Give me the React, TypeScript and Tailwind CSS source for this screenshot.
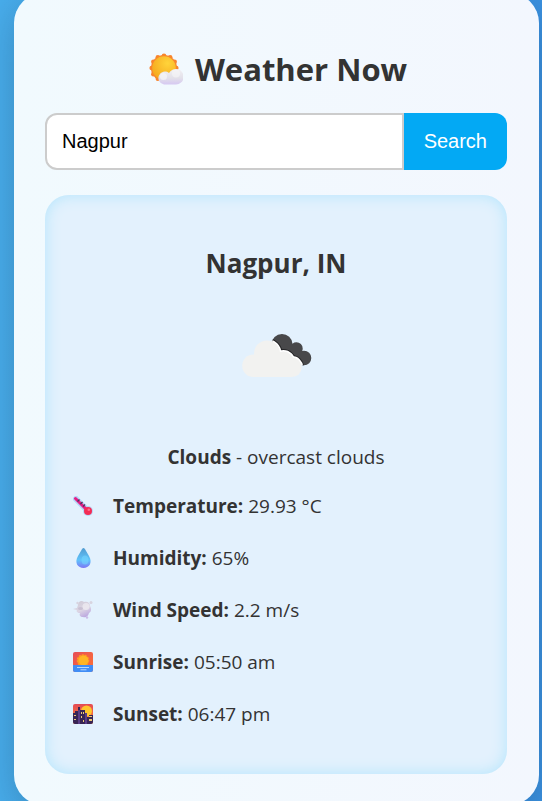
import { useState } from "react";
import type { ReactNode } from "react";

function SunCloudIcon() {
  const petals = Array.from({ length: 12 }, (_, i) => (i * Math.PI) / 6);
  return (
    <svg viewBox="-4 0 38 34" className="h-[34px] w-[38px] shrink-0" aria-hidden="true">
      <defs>
        <radialGradient id="sun" cx="0.65" cy="0.3" r="0.8">
          <stop offset="0" stopColor="#ffd43a" />
          <stop offset="1" stopColor="#f5a51c" />
        </radialGradient>
        <linearGradient id="puff" x1="0" y1="0" x2="0" y2="1">
          <stop offset="0" stopColor="#f2f1f4" />
          <stop offset="0.6" stopColor="#e2e0e9" />
          <stop offset="1" stopColor="#d6c8f2" />
        </linearGradient>
      </defs>
      <circle cx="15" cy="16" r="13" fill="#f8852c" />
      {petals.map((a) => (
        <circle key={a} cx={15 + 12.3 * Math.cos(a)} cy={16 + 12.3 * Math.sin(a)} r="2.3" fill="#f8852c" />
      ))}
      <circle cx="15" cy="16" r="11.8" fill="url(#sun)" />
      <path d="M15 32.500a6.500 6.500 0 1 1 5-11.500A7.800 7.800 0 1 1 27 32.500z" fill="url(#puff)" />
      <circle cx="14.500" cy="24.500" r="3.500" fill="#f7f6f8" opacity="0.7" />
      <circle cx="27" cy="21.500" r="4" fill="#f7f6f8" opacity="0.6" />
    </svg>
  );
}

function FrontCloud() {
  return (
    <>
      <circle cx="27.500" cy="58.700" r="11.300" />
      <circle cx="41" cy="46.500" r="13" />
      <circle cx="57.500" cy="54.500" r="10" />
      <circle cx="66" cy="60.300" r="9.700" />
      <path d="M27.500 50h38v20h-38z" />
    </>
  );
}

function OvercastIcon() {
  return (
    <svg viewBox="0 0 100 100" className="mx-auto size-[100px]" role="img" aria-label="overcast clouds">
      <defs>
        <clipPath id="back-cloud">
          <circle cx="56" cy="37.500" r="10.500" />
          <circle cx="70.500" cy="41.500" r="6.200" />
          <circle cx="78" cy="51" r="7.300" />
          <path d="M47 42l26-3 6 19-13 0-18-12z" />
        </clipPath>
      </defs>
      <g clipPath="url(#back-cloud)">
        <rect width="100" height="100" fill="#48484a" />
        <g fill="#252527" stroke="#252527" strokeWidth="5"><FrontCloud /></g>
        <g fill="#ffffff" stroke="#ffffff" strokeWidth="3"><FrontCloud /></g>
      </g>
      <g fill="#f2f2f0"><FrontCloud /></g>
    </svg>
  );
}

function ThermometerIcon() {
  return (
    <svg viewBox="0 0 20 20" className="size-5" aria-hidden="true">
      <path d="M3 3l11 11" stroke="#b5d5f8" strokeWidth="6" strokeLinecap="round" />
      <circle cx="15" cy="15" r="5" fill="#b5d5f8" />
      <path d="M2.500 2.500L14 14" stroke="#e51e87" strokeWidth="3" strokeLinecap="round" />
      <path d="M6.500 3.500l-2 2M9.500 6l-2 2M12 8.500l-2 2" stroke="#493760" strokeWidth="1.300" />
      <circle cx="15" cy="15" r="4" fill="#f42c55" />
      <circle cx="15.800" cy="13.800" r="1.300" fill="#ff718d" />
    </svg>
  );
}

function DropletIcon() {
  return (
    <svg viewBox="0 0 20 20" className="size-5" aria-hidden="true">
      <defs>
        <linearGradient id="drop" x1="0" y1="0" x2="0" y2="1">
          <stop offset="0" stopColor="#529cd1" />
          <stop offset="0.6" stopColor="#60c3fb" />
          <stop offset="1" stopColor="#7c77f5" />
        </linearGradient>
      </defs>
      <path d="M10.500 0c1 0 1.500 1 2 2l3.500 6c4 7 0 12-5.500 12S1 15 5 8l3.500-6c.5-1 1-2 2-2z" fill="url(#drop)" />
      <ellipse cx="12" cy="12" rx="3.500" ry="4.500" fill="#76d7ff" opacity="0.55" />
    </svg>
  );
}

function WindIcon() {
  return (
    <svg viewBox="0 0 20 20" className="size-5" aria-hidden="true">
      <defs>
        <linearGradient id="gust" x1="0.2" y1="0" x2="0.7" y2="1">
          <stop offset="0" stopColor="#cfcad6" />
          <stop offset="0.55" stopColor="#dcd6e4" />
          <stop offset="1" stopColor="#baa5df" />
        </linearGradient>
      </defs>
      <path d="M5 5c0-4 4-5 6-3 4-1 6 1 6 4 2 3 1 6-1 7-1 4-4 5-6 4-3 0-4-2-3-4-3 0-4-2-3-3L0 9l4-1z" fill="url(#gust)" />
      <circle cx="18" cy="2.500" r="1.500" fill="#d8d4df" />
      <circle cx="4.500" cy="3" r="1.200" fill="#d8d4df" />
      <circle cx="14" cy="17.500" r="1.200" fill="#cabbe7" />
      <ellipse cx="13" cy="6.500" rx="3.500" ry="3.500" fill="#eceaf0" opacity="0.8" />
      <ellipse cx="7.500" cy="8.500" rx="2.500" ry="1.500" fill="#c2b8cd" opacity="0.7" />
    </svg>
  );
}

function SunriseIcon() {
  return (
    <svg viewBox="0 0 20 20" className="size-5" aria-hidden="true">
      <defs>
        <linearGradient id="dawn" x1="0" y1="0" x2="1" y2="1">
          <stop offset="0" stopColor="#e64d57" />
          <stop offset="1" stopColor="#ff7534" />
        </linearGradient>
        <clipPath id="dawn-tile"><rect width="20" height="20" rx="2" /></clipPath>
      </defs>
      <g clipPath="url(#dawn-tile)">
        <rect width="20" height="20" fill="url(#dawn)" />
        <circle cx="10" cy="8.500" r="5.500" fill="#ff9d20" stroke="#ff9d20" strokeWidth="1.500" strokeDasharray="2 1" />
        <circle cx="10.500" cy="8.500" r="4.800" fill="#ffb524" />
        <path d="M0 13h20v7H0z" fill="#418df5" />
        <path d="M4 15.500h12M7.500 17.800h6" stroke="#b5d8ff" strokeWidth="1" />
      </g>
    </svg>
  );
}

function SunsetIcon() {
  return (
    <svg viewBox="0 0 20 20" className="size-5" aria-hidden="true">
      <defs>
        <linearGradient id="dusk" x1="0" y1="0" x2="0" y2="1">
          <stop offset="0" stopColor="#e44b55" />
          <stop offset="1" stopColor="#ff862f" />
        </linearGradient>
        <clipPath id="dusk-tile"><rect width="20" height="20" rx="2" /></clipPath>
      </defs>
      <g clipPath="url(#dusk-tile)">
        <rect width="20" height="20" fill="url(#dusk)" />
        <circle cx="13.500" cy="7" r="5.500" fill="#ffc52c" />
        <path d="M0 9h2V7h3V3h2v3h5v4h2v3h2v-2h4v9H0z" fill="#382454" />
        <path d="M5 6h2v14H5zM12 9h2v11h-2z" fill="#5a3c86" />
        <path d="M8 8h1v2H8zM10 8h1v2h-1zM8 12h1v2H8zM1 11h2v1H1zM1 15h2v1H1zM10 16h1v2h-1zM16 12h3v1h-3zM16 15h3v2h-3z" fill="#efc875" />
      </g>
    </svg>
  );
}

const readings: { icon: ReactNode; label: string; value: string }[] = [
  { icon: <ThermometerIcon />, label: "Temperature:", value: "29.93 °C" },
  { icon: <DropletIcon />, label: "Humidity:", value: "65%" },
  { icon: <WindIcon />, label: "Wind Speed:", value: "2.2 m/s" },
  { icon: <SunriseIcon />, label: "Sunrise:", value: "05:50 am" },
  { icon: <SunsetIcon />, label: "Sunset:", value: "06:47 pm" },
];

export default function App() {
  const [city, setCity] = useState("Nagpur");
  return (
    <div className="h-screen overflow-hidden bg-linear-to-r from-[#48adec] to-[#3b92e2] pr-[3px] pl-[14px] font-['Open_Sans','Noto_Sans',sans-serif] text-[#333]">
      <main className="-mt-[7px] rounded-[30px] bg-linear-to-r from-[#f1fafe] to-[#f3f7fe] pt-[52px] pr-8 pb-[31px] pl-[31px] shadow-[0_10px_40px_rgba(0,0,0,0.2)]">
        <h1 className="flex items-center justify-center gap-3 text-[31px] leading-12 font-bold">
          <SunCloudIcon />
          Weather Now
        </h1>
        <form className="mt-5 flex h-[57px] font-['Liberation_Sans',Arial,sans-serif] text-xl" onSubmit={(e) => e.preventDefault()}>
          <input
            aria-label="City"
            value={city}
            onChange={(e) => setCity(e.target.value)}
            className="min-w-0 flex-1 rounded-l-xl border-2 border-[#ccc] bg-white px-[15px] pb-0.5 text-black outline-none"
          />
          <button type="submit" className="rounded-r-xl bg-[#03a9f4] px-5 pb-0.5 text-white">Search</button>
        </form>
        <section className="mt-[25px] rounded-3xl bg-[#e3f1fd] px-7 pt-12 pb-[34px] shadow-[inset_0_0_15px_#b3e5fc]">
          <h2 className="text-center text-[26px] leading-10 font-bold">Nagpur, IN</h2>
          <div className="mt-6"><OvercastIcon /></div>
          <p className="mt-9 text-center text-[19px] leading-7"><strong>Clouds</strong> - overcast clouds</p>
          <ul className="mt-[9px] text-[19px]">
            {readings.map((r) => (
              <li key={r.label} className="flex h-13 items-center gap-5">
                {r.icon}
                <span><strong>{r.label}</strong> {r.value}</span>
              </li>
            ))}
          </ul>
        </section>
      </main>
    </div>
  );
}
